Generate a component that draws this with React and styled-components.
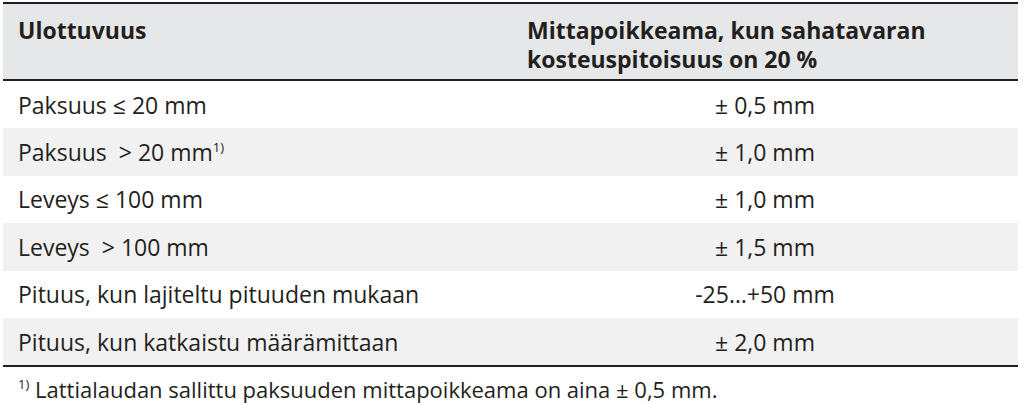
import React from 'react';
import styled, { createGlobalStyle } from 'styled-components';

const GlobalStyle = createGlobalStyle`
  body {
    margin: 0;
    background: #fff;
    font-family: "Open Sans", "Liberation Sans", sans-serif;
    color: #231f20;
  }
`;

// Page wrapper
const Page = styled.div`
  width: 1024px;
  height: 403px;
  padding: 2px 6px 0 3px;
  box-sizing: border-box;
  overflow: hidden;
`;

const Table = styled.div`
  border-top: 2px solid #231f20;
  border-bottom: 2px solid #231f20;
`;

const HeadRow = styled.div`
  display: grid;
  grid-template-columns: 509px 1fr;
  height: 75px;
  background: #e6e7e8;
  border-bottom: 2px solid #231f20;
`;

const HeadCell = styled.div`
  padding: 12px 15px 0;
  font-weight: 700;
  font-size: 23px;
  line-height: 29px;
`;

const Row = styled.div`
  display: grid;
  grid-template-columns: 509px 1fr;
  height: 47.4px;
  align-items: center;
  background: ${(p) => (p.$shaded ? '#f1f1f2' : '#fff')};
  font-size: 23px;
`;

const Cell = styled.div`
  padding: 0 15px;
  white-space: pre;
  text-align: ${(p) => (p.$center ? 'center' : 'left')};
`;

const Sup = styled.sup`
  font-size: 13px;
  vertical-align: 9px;
  line-height: 0;
`;

const Footnote = styled.p`
  margin: 0;
  padding: 9px 15px 0;
  font-size: 22px;
  line-height: 26px;
`;

const rows = [
  { dim: 'Paksuus ≤ 20 mm', value: '± 0,5 mm' },
  { dim: 'Paksuus  > 20 mm', note: true, value: '± 1,0 mm' },
  { dim: 'Leveys ≤ 100 mm', value: '± 1,0 mm' },
  { dim: 'Leveys  > 100 mm', value: '± 1,5 mm' },
  { dim: 'Pituus, kun lajiteltu pituuden mukaan', value: '-25…+50 mm' },
  { dim: 'Pituus, kun katkaistu määrämittaan', value: '± 2,0 mm' },
];

const App = () => {
  return (
    <Page>
      <GlobalStyle />
      <Table>
        <HeadRow>
          <HeadCell>Ulottuvuus</HeadCell>
          <HeadCell>
            Mittapoikkeama, kun sahatavaran
            <br />
            kosteuspitoisuus on 20 %
          </HeadCell>
        </HeadRow>
        {rows.map((r, i) => (
          <Row key={r.dim} $shaded={i % 2 === 1}>
            <Cell>
              {r.dim}
              {r.note && <Sup>1)</Sup>}
            </Cell>
            <Cell $center>{r.value}</Cell>
          </Row>
        ))}
      </Table>
      <Footnote>
        <Sup>1)</Sup> Lattialaudan sallittu paksuuden mittapoikkeama on aina ± 0,5 mm.
      </Footnote>
    </Page>
  );
};

export default App;
